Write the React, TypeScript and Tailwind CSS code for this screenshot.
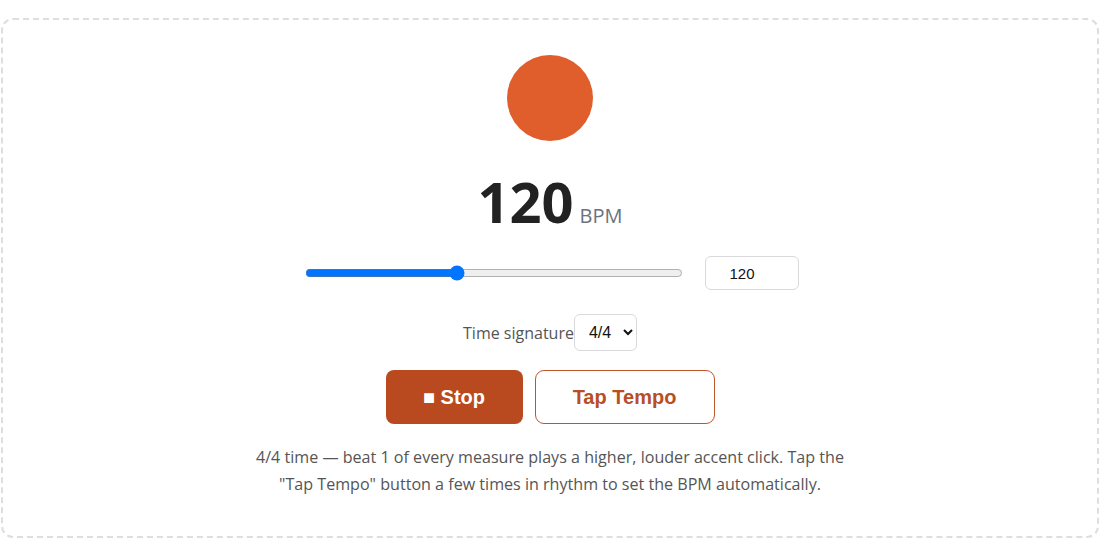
import { useState } from 'react'

// Metronome card: pulse dot, big BPM readout, slider + number box,
// time signature picker, transport buttons and a short help line.
export default function App() {
  const [bpm, setBpm] = useState(120)
  const [sig, setSig] = useState('4/4')

  return (
    <div className="min-h-screen bg-white px-px pt-[18px] font-['Open_Sans',sans-serif]">
      <div className="flex h-[520px] flex-col items-center rounded-xl border-2 border-dashed border-[#dedede] pt-[35px]">
        <div className="h-[86px] w-[86px] rounded-full bg-[#e05e2c]" />

        <div className="mt-[32px] flex items-baseline gap-[6px] leading-none">
          <span className="text-[56px] font-bold text-[#222]">{bpm}</span>
          <span className="text-[20px] text-[#6b7280]">BPM</span>
        </div>

        <div className="mt-[27px] flex items-center gap-[22px] pl-[3px]">
          <input
            type="range"
            min={40}
            max={240}
            value={bpm}
            onChange={(e) => setBpm(Number(e.target.value))}
            className="w-[378px]"
          />
          <input
            type="number"
            value={bpm}
            onChange={(e) => setBpm(Number(e.target.value))}
            className="h-[34px] w-[94px] rounded-md border border-[#d9d9d9] pr-[4px] text-center font-['Liberation_Sans',sans-serif] text-[15px] text-[#111]"
          />
        </div>

        <div className="mt-[24px] flex items-center">
          <label className="text-[16px] text-[#555]">Time signature</label>
          <select
            value={sig}
            onChange={(e) => setSig(e.target.value)}
            className="h-[37px] w-[63px] rounded-md border border-[#d9d9d9] bg-white pl-[10px] font-['Liberation_Sans',sans-serif] text-[16px] text-[#111]"
          >
            <option>2/4</option>
            <option>3/4</option>
            <option>4/4</option>
            <option>6/8</option>
          </select>
        </div>

        <div className="mt-[19px] flex gap-[12px] font-['Liberation_Sans',sans-serif] text-[20px] font-bold">
          <button type="button" className="h-[54px] w-[137px] rounded-lg bg-[#b94a20] text-white">
            ■ Stop
          </button>
          <button
            type="button"
            className="h-[54px] w-[180px] rounded-[9px] border-[1.5px] border-[#c0552b] bg-white text-[#b94e25]"
          >
            Tap Tempo
          </button>
        </div>

        <p className="mt-[20px] max-w-[610px] text-center text-[16.1px] leading-[27px] text-[#555]">
          4/4 time — beat 1 of every measure plays a higher, louder accent click. Tap the "Tap Tempo" button a few
          times in rhythm to set the BPM automatically.
        </p>
      </div>
    </div>
  )
}
